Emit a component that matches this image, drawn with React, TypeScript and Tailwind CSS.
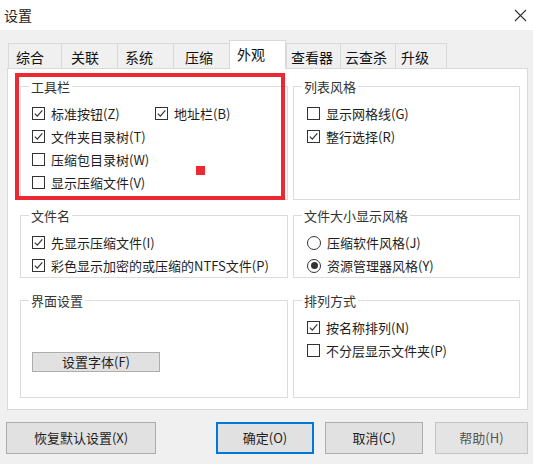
import React from "react";

const tabs = [
  { label: "综合", w: "w-[53px]", pl: "pl-[7px]" },
  { label: "关联", w: "w-[56px]", pl: "pl-[9px]" },
  { label: "系统", w: "w-[56px]", pl: "pl-[7px]" },
  { label: "压缩", w: "w-[56px]", pl: "pl-[11px]" },
  { label: "外观", w: "w-[57px]", pl: "pl-[7px]", active: true },
  { label: "查看器", w: "w-[54px]", pl: "pl-[4px]" },
  { label: "云查杀", w: "w-[55px]", pl: "pl-[4px]" },
  { label: "升级", w: "w-[52px]", pl: "pl-[5px]" },
];

function CheckBox({ checked }: { checked?: boolean }) {
  return (
    <span className="w-[13px] h-[13px] border border-[#333] bg-white flex items-center justify-center shrink-0">
      {checked && (
        <svg width="11" height="11" viewBox="0 0 11 11">
          <path d="M1.8 5.6 L4.3 8.1 L9.3 2.4" fill="none" stroke="#333" strokeWidth="1.2" />
        </svg>
      )}
    </span>
  );
}

function Radio({ checked }: { checked?: boolean }) {
  return (
    <span className="w-[14px] h-[14px] rounded-full border border-[#333] bg-white flex items-center justify-center shrink-0">
      {checked && <span className="w-[7px] h-[7px] rounded-full bg-[#333]" />}
    </span>
  );
}

function Item({ label, checked, radio, className = "" }: { label: string; checked?: boolean; radio?: boolean; className?: string }) {
  return (
    <div className={"flex items-center h-[23px] gap-[6px] " + className}>
      {radio ? <Radio checked={checked} /> : <CheckBox checked={checked} />}
      <span className="text-[13px] leading-none text-[#1e1e1e] whitespace-nowrap">{label}</span>
    </div>
  );
}

function Group({ title, className = "", children }: { title: string; className?: string; children?: React.ReactNode }) {
  return (
    <div className={"relative border border-[#dcdcdc] " + className}>
      {/* 标题压在边框上 */}
      <span className="absolute left-[8px] -top-[9px] bg-white px-[2px] text-[13px] leading-[17px] text-[#333]">
        {title}
      </span>
      {children}
    </div>
  );
}

export default function App() {
  return (
    <div
      className="relative w-[533px] h-[464px] bg-[#f0f0f0] overflow-hidden"
      style={{ fontFamily: '"Noto Sans CJK SC", "Liberation Sans", sans-serif' }}
    >
      {/* 标题栏 */}
      <div className="h-[30px] bg-white flex items-center justify-between pl-[4px] pr-[6px]">
        <span className="text-[14px] text-[#222]">设置</span>
        <svg width="13" height="13" viewBox="0 0 13 13">
          <path d="M1 1 L12 12 M12 1 L1 12" stroke="#333" strokeWidth="1.1" />
        </svg>
      </div>

      {/* 选项卡 */}
      <div className="flex items-end h-[28px] mt-[10px] pl-[8px]">
        {tabs.map((t) =>
          t.active ? (
            <div
              key={t.label}
              className={`${t.w} ${t.pl} h-[29px] -mb-px bg-white border border-b-0 border-[#d9d9d9] pt-[3px] text-[14px] text-[#111] relative z-10`}
            >
              {t.label}
            </div>
          ) : (
            <div
              key={t.label}
              className={`${t.w} ${t.pl} h-[25px] bg-[#f0f0f0] border border-b-0 border-r-0 border-[#d9d9d9] last:border-r pt-[3px] text-[14px] text-[#111]`}
            >
              {t.label}
            </div>
          )
        )}
      </div>

      {/* 内容面板 */}
      <div className="ml-[7px] w-[521px] h-[342px] bg-white border border-[#d9d9d9] pt-[17px] pl-[12px]">
        <div className="flex gap-[5px] h-[114px]">
          <Group title="工具栏" className="w-[268px] pt-[15px] pl-[11px]">
            <div className="flex">
              <Item label="标准按钮(Z)" checked className="w-[123px]" />
              <Item label="地址栏(B)" checked />
            </div>
            <Item label="文件夹目录树(T)" checked />
            <Item label="压缩包目录树(W)" />
            <Item label="显示压缩文件(V)" />
          </Group>
          <Group title="列表风格" className="w-[227px] pt-[15px] pl-[13px]">
            <Item label="显示网格线(G)" />
            <Item label="整行选择(R)" checked />
          </Group>
        </div>

        <div className="flex gap-[5px] h-[63px] mt-[15px]">
          <Group title="文件名" className="w-[268px] pt-[15px] pl-[11px]">
            <Item label="先显示压缩文件(I)" checked />
            <Item label="彩色显示加密的或压缩的NTFS文件(P)" checked />
          </Group>
          <Group title="文件大小显示风格" className="w-[227px] pt-[15px] pl-[13px]">
            <Item label="压缩软件风格(J)" radio />
            <Item label="资源管理器风格(Y)" radio checked />
          </Group>
        </div>

        <div className="flex gap-[5px] h-[98px] mt-[22px]">
          <Group title="界面设置" className="w-[268px] pt-[47px] pl-[11px]">
            <button className="w-[128px] h-[20px] bg-[#e1e1e1] border border-[#adadad] text-[13px] leading-none text-[#1e1e1e]">
              设置字体(F)
            </button>
          </Group>
          <Group title="排列方式" className="w-[227px] pt-[15px] pl-[13px]">
            <Item label="按名称排列(N)" checked />
            <Item label="不分层显示文件夹(P)" />
          </Group>
        </div>
      </div>

      {/* 底部按钮 */}
      <div className="flex mt-[12px] pl-[6px] h-[32px] text-[13px] text-[#1e1e1e]">
        <button className="w-[150px] h-full bg-[#e1e1e1] border border-[#adadad]">恢复默认设置(X)</button>
        <button className="w-[98px] h-full ml-[60px] bg-[#e1e1e1] border-2 border-[#0078d7]">确定(O)</button>
        <button className="w-[98px] h-full ml-[11px] bg-[#e1e1e1] border border-[#adadad]">取消(C)</button>
        <button className="w-[93px] h-full ml-[12px] bg-[#e4e4e4] border border-[#c4c4c4] text-[#555]">帮助(H)</button>
      </div>

      {/* 红色标注框 */}
      <div className="absolute left-[15px] top-[73px] w-[270px] h-[127px] border-4 border-[#ec2830] pointer-events-none" />
      <div className="absolute left-[196px] top-[166px] w-[9px] h-[9px] bg-[#ec2830]" />
    </div>
  );
}
